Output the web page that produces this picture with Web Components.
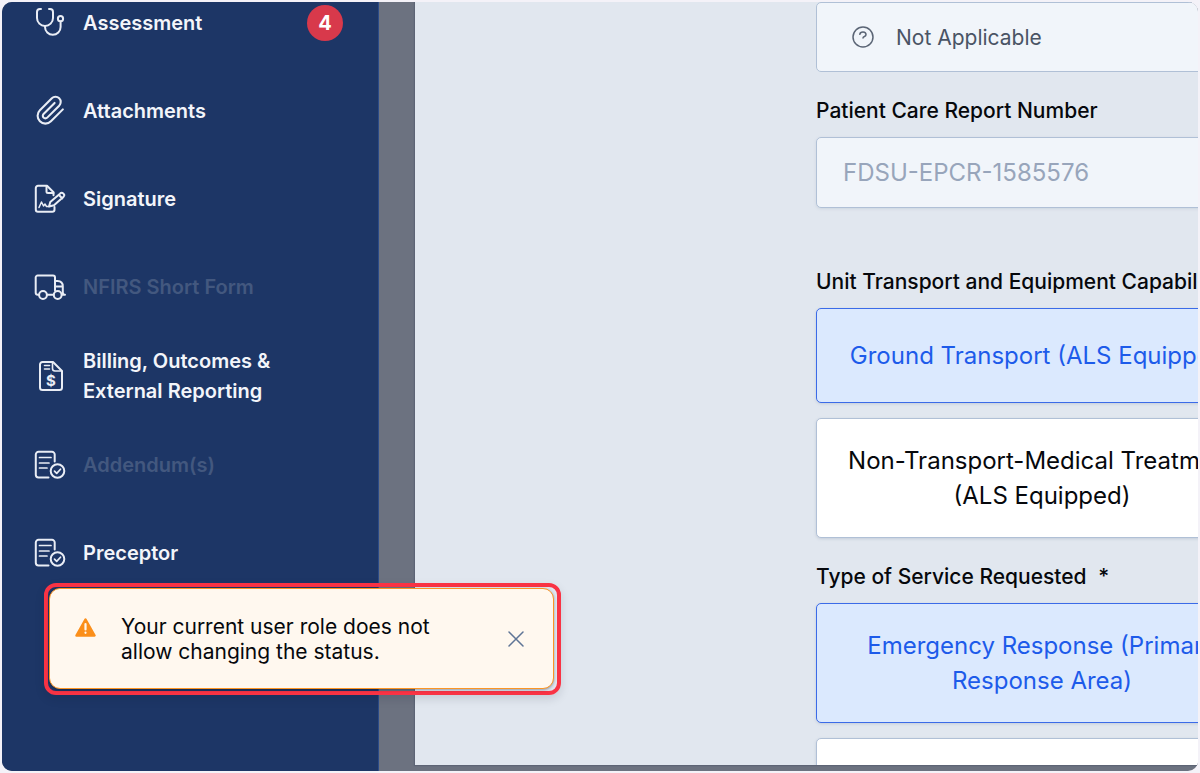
<!DOCTYPE html>
<html lang="en">
<head>
<meta charset="utf-8">
<meta name="viewport" content="width=device-width, initial-scale=1">
<title>Patient Care Report</title>
<style>
  body {
    margin: 0;
    background: #f4f2f8;
    font-family: Inter, "Liberation Sans", sans-serif;
    color: #06080c;
  }
</style>
</head>
<body>
<app-shell>
  <side-nav slot="nav">
    <nav-item icon="stethoscope" badge="4">Assessment</nav-item>
    <nav-item icon="clip">Attachments</nav-item>
    <nav-item icon="signature">Signature</nav-item>
    <nav-item icon="truck" disabled>NFIRS Short Form</nav-item>
    <nav-item icon="bill">Billing, Outcomes &amp; External Reporting</nav-item>
    <nav-item icon="report" disabled>Addendum(s)</nav-item>
    <nav-item icon="report">Preceptor</nav-item>
  </side-nav>

  <report-form>
    <na-button>Not Applicable</na-button>
    <text-field label="Patient Care Report Number" value="FDSU-EPCR-1585576"></text-field>
    <option-group label="Unit Transport and Equipment Capability">
      <option-button selected>Ground Transport (ALS Equipped)</option-button>
      <option-button>Non-Transport-Medical Treatment (ALS Equipped)</option-button>
    </option-group>
    <option-group label="Type of Service Requested" required>
      <option-button selected>Emergency Response (Primary Response Area)</option-button>
      <option-button></option-button>
    </option-group>
  </report-form>

  <toast-message slot="toast">Your current user role does not allow changing the status.</toast-message>
</app-shell>

<script>
const ICONS = {
  stethoscope: `
    <path d="M7 2H6Q3 2 3 5v6a8 8 0 0 0 16 0V5q0-3-3-3h-1"/>
    <path d="M11 19v1a7.800 7.800 0 0 0 15.600 0v-5.500"/>
    <circle cx="26.500" cy="11.700" r="2.600"/>`,
  clip: `
    <path transform="translate(1 0) scale(1.300)" stroke-width="1.600" d="m21.440 11.050-9.190 9.190a6 6 0 0 1-8.490-8.490l9.190-9.190a4 4 0 0 1 5.660 5.660l-9.200 9.190a2 2 0 0 1-2.830-2.830l8.490-8.480"/>`,
  signature: `
    <path d="M20.500 24v2.500a2.200 2.200 0 0 1-2.200 2.200H4a2.200 2.200 0 0 1-2.200-2.200V5A2.200 2.200 0 0 1 4 2.800h9l6.500 6.500v3"/>
    <path d="M12.500 3v5.500a1.500 1.500 0 0 0 1.500 1.500h5.500"/>
    <path d="m15 23.500 1.300-4.500L26 10.700a2.300 2.300 0 0 1 3.600 3L20 22.200zM25 12l3.300 3.500"/>
    <path d="M5 24.500 7.500 19l2 4 1.500-2 1.500 2.500H15" stroke-width="1.500"/>`,
  truck: `
    <path d="M5 23.800H3.700a2 2 0 0 1-2-2V6.500a2 2 0 0 1 2-2H19a2 2 0 0 1 2 2v13M13 23.800h6.500"/>
    <path d="M21 10h2.500q5.300 0 5.300 5.500v6q0 2.300 2.200 2.300h-3M21 15.500h7.500"/>
    <circle cx="9" cy="24" r="3.900"/>
    <circle cx="23.700" cy="24" r="3.900"/>`,
  bill: `
    <path d="M19 2H8.500A2.500 2.500 0 0 0 6 4.500v23A2.500 2.500 0 0 0 8.500 30h17a2.500 2.500 0 0 0 2.500-2.500V11z"/>
    <path d="M18.500 2.500v6a2.500 2.500 0 0 0 2.500 2.500h6.500M10.500 5.500h5M10.500 9h5" stroke-width="1.600"/>
    <text x="17" y="26" text-anchor="middle" font-size="15" font-weight="700" fill="currentColor" stroke="none">$</text>`,
  report: `
    <path d="M14.500 28.500H4.500a2.700 2.700 0 0 1-2.700-2.700V5.500a2.700 2.700 0 0 1 2.700-2.700H18a2.700 2.700 0 0 1 2.700 2.700v7"/>
    <path d="M5.500 8.500H17M5.500 14h9.500M5.500 19h7.500" stroke-width="1.700"/>
    <circle cx="23.500" cy="22" r="6.800"/>
    <path d="m20.500 22.200 2.200 2.200 3.800-4.200" stroke-width="1.700"/>`,
};

function render(el, html) {
  el.attachShadow({ mode: "open" }).innerHTML = html;
}

class AppShell extends HTMLElement {
  connectedCallback() {
    render(this, `
      <style>
        :host { display: block; height: 100vh; padding: 2px; box-sizing: border-box; }
        .frame {
          position: relative;
          display: flex;
          height: 100%;
          overflow: hidden;
          border-radius: 10px;
          background: #6c7280;
        }
        main {
          flex: 1;
          min-width: 0;
          margin: 0 0 6px 36px;
          overflow: hidden;
          background: #e1e7ef;
          box-shadow: 0 0 1px 1px #5d6475;
        }
      </style>
      <div class="frame">
        <slot name="nav"></slot>
        <main><slot></slot></main>
        <slot name="toast"></slot>
      </div>
    `);
  }
}

class SideNav extends HTMLElement {
  connectedCallback() {
    render(this, `
      <style>
        :host {
          display: block;
          flex: 0 0 376px;
          overflow: hidden;
          background: #1d3666;
          border-right: 1px solid #2b4b88;
        }
        /* the list is scrolled down a little */
        nav { display: flex; flex-direction: column; margin-top: -23px; }
      </style>
      <nav aria-label="Report sections"><slot></slot></nav>
    `);
  }
}

class NavItem extends HTMLElement {
  connectedCallback() {
    const badge = this.getAttribute("badge");
    render(this, `
      <style>
        :host { display: block; }
        a {
          display: flex;
          align-items: center;
          gap: 17px;
          min-height: 88px;
          padding: 15px 35px 15px 32px;
          box-sizing: border-box;
          color: #f3f5fa;
          font-size: 20px;
          font-weight: 600;
          line-height: 30px;
          text-decoration: none;
        }
        svg {
          flex: none;
          width: 32px;
          height: 32px;
          fill: none;
          stroke: #e9edf5;
          stroke-width: 2;
          stroke-linecap: round;
          stroke-linejoin: round;
          color: #e9edf5;
        }
        .text { flex: 1; max-width: 210px; }
        :host([disabled]) .text { color: #43587f; }
        .badge {
          flex: none;
          margin-left: auto;
          width: 36px;
          border-radius: 18px;
          background: #d8394b;
          color: #fff;
          font-weight: 700;
          line-height: 36px;
          text-align: center;
        }
      </style>
      <a href="#" ${this.hasAttribute("disabled") ? 'aria-disabled="true"' : ""}>
        <svg viewBox="0 0 32 32" aria-hidden="true">${ICONS[this.getAttribute("icon")]}</svg>
        <span class="text"><slot></slot></span>
        ${badge ? `<span class="badge">${badge}</span>` : ""}
      </a>
    `);
  }
}

class ReportForm extends HTMLElement {
  connectedCallback() {
    render(this, `
      <style>
        :host { display: block; padding-left: 401px; }
        form { display: flex; flex-direction: column; gap: 27px; width: 452px; }
      </style>
      <form><slot></slot></form>
    `);
  }
}

class NaButton extends HTMLElement {
  connectedCallback() {
    render(this, `
      <style>
        :host { display: block; }
        button {
          display: flex;
          align-items: center;
          gap: 22px;
          width: 100%;
          height: 70px;
          padding: 0 35px;
          border: 1px solid #b0c0d6;
          border-radius: 5px;
          background: #f1f5fa;
          color: #4a5465;
          font: inherit;
          font-size: 21px;
        }
        svg { width: 22px; height: 22px; fill: none; stroke: #5b6575; stroke-width: 1.500; stroke-linecap: round; }
      </style>
      <button type="button">
        <svg viewBox="0 0 22 22" aria-hidden="true">
          <circle cx="11" cy="11" r="10"/>
          <path d="M7.800 8.300C8.300 5.300 14 5.300 14 8.700c0 2.200-3 1.500-3 3.300"/>
        </svg>
        <slot></slot>
      </button>
    `);
  }
}

const labelStyle = `
  .label {
    display: block;
    margin-bottom: 14px;
    font-size: 21px;
    font-weight: 500;
    line-height: 24px;
    white-space: nowrap;
  }
`;

class TextField extends HTMLElement {
  connectedCallback() {
    render(this, `
      <style>
        ${labelStyle}
        /* room below for a hint line */
        :host { display: block; padding-bottom: 35px; }
        input {
          display: block;
          width: 100%;
          height: 71px;
          padding: 0 26px;
          box-sizing: border-box;
          border: 1px solid #b0c0d6;
          border-radius: 5px;
          background: #f1f5fa;
          color: #98a5bb;
          font: inherit;
          font-size: 24px;
          box-shadow: 0 1px 3px #94a3b840;
        }
      </style>
      <label class="label" for="field">${this.getAttribute("label")}</label>
      <input id="field" type="text" readonly value="${this.getAttribute("value")}">
    `);
  }
}

class OptionGroup extends HTMLElement {
  connectedCallback() {
    render(this, `
      <style>
        ${labelStyle}
        :host { display: block; }
        .options { display: flex; flex-direction: column; gap: 15px; }
        .star { margin-left: 6px; }
      </style>
      <div role="group" aria-labelledby="label">
        <span class="label" id="label">${this.getAttribute("label")}
          ${this.hasAttribute("required") ? '<span class="star">*</span>' : ""}</span>
        <div class="options"><slot></slot></div>
      </div>
    `);
  }
}

class OptionButton extends HTMLElement {
  connectedCallback() {
    render(this, `
      <style>
        :host { display: block; }
        button {
          display: block;
          width: 100%;
          min-height: 95px;
          padding: 24px 30px;
          border: 1px solid #b0c0d6;
          border-radius: 5px;
          background: #fff;
          color: #06080c;
          font: inherit;
          font-size: 24px;
          line-height: 35px;
          text-align: center;
          box-shadow: 0 1px 3px #94a3b860;
        }
        button[aria-pressed="true"] {
          border-color: #3b6be8;
          background: #dbe9fe;
          color: #1d5bea;
        }
      </style>
      <button type="button" aria-pressed="${this.hasAttribute("selected")}"><slot></slot></button>
    `);
  }
}

class ToastMessage extends HTMLElement {
  connectedCallback() {
    render(this, `
      <style>
        :host {
          position: absolute;
          left: 42px;
          bottom: 76px;
          width: 517px;
          padding: 1px 3px 2px 1px;
          box-sizing: border-box;
          border: 4px solid #f93344;
          border-radius: 12px;
          box-shadow: 0 4px 10px #0f172a20;
        }
        .toast {
          display: flex;
          align-items: center;
          min-height: 101px;
          padding: 0 26px 0 25px;
          box-sizing: border-box;
          border: 1px solid #fb9524;
          border-radius: 11px;
          background: #fff8ef;
          box-shadow: 0 1px 3px #0f172a60;
        }
        .warn { flex: none; align-self: flex-start; width: 21px; height: 19px; margin-top: 29px; }
        .text { flex: 1; margin-left: 25px; font-size: 21px; line-height: 25px; }
        .text span { display: block; max-width: 330px; }
        button { flex: none; display: flex; padding: 2px; border: 0; background: none; }
        .close { width: 18px; height: 18px; stroke: #5f7596; stroke-width: 1.500; stroke-linecap: round; }
      </style>
      <div class="toast" role="alert">
        <svg class="warn" viewBox="0 0 21 19" aria-hidden="true">
          <path d="M10.500 1.500 19.500 17.500H1.500z" fill="#fb8f1a" stroke="#fb8f1a" stroke-width="2.500" stroke-linejoin="round"/>
          <path d="M10.500 6v5.500M10.500 14.500v.3" stroke="#fff8ef" stroke-width="2.200" stroke-linecap="round"/>
        </svg>
        <div class="text"><span><slot></slot></span></div>
        <button type="button" aria-label="Close">
          <svg class="close" viewBox="0 0 18 18"><path d="m2 2 14 14M16 2 2 16"/></svg>
        </button>
      </div>
    `);
  }
}

customElements.define("app-shell", AppShell);
customElements.define("side-nav", SideNav);
customElements.define("nav-item", NavItem);
customElements.define("report-form", ReportForm);
customElements.define("na-button", NaButton);
customElements.define("text-field", TextField);
customElements.define("option-group", OptionGroup);
customElements.define("option-button", OptionButton);
customElements.define("toast-message", ToastMessage);
</script>
</body>
</html>
